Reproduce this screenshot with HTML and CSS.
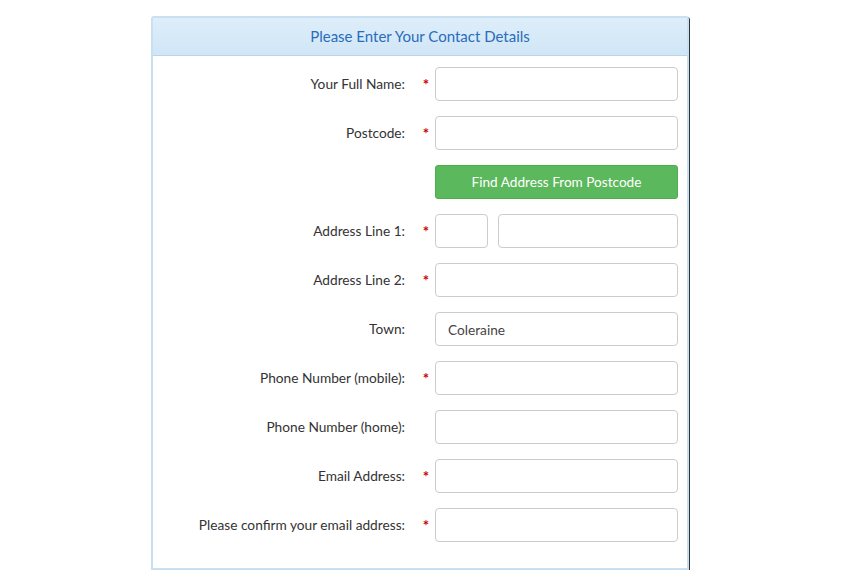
FILE: index.html
```html
<!DOCTYPE html>
<html>
<head>
<meta charset="utf-8">
<link rel="stylesheet" href="styles.css">
</head>
<body>
<div class="panel">
  <div class="panel-head">Please Enter Your Contact Details</div>
  <div class="form">
    <label class="lbl">Your Full Name:</label><span class="req">*</span><input class="field" type="text">
    <label class="lbl">Postcode:</label><span class="req">*</span><input class="field" type="text">
    <span></span><span></span><button class="btn">Find Address From Postcode</button>
    <label class="lbl">Address Line 1:</label><span class="req">*</span><div class="pair"><input class="field small" type="text"><input class="field" type="text"></div>
    <label class="lbl">Address Line 2:</label><span class="req">*</span><input class="field" type="text">
    <label class="lbl">Town:</label><span class="req"></span><input class="field" type="text" value="Coleraine">
    <label class="lbl">Phone Number (mobile):</label><span class="req">*</span><input class="field" type="text">
    <label class="lbl">Phone Number (home):</label><span class="req"></span><input class="field" type="text">
    <label class="lbl">Email Address:</label><span class="req">*</span><input class="field" type="text">
    <label class="lbl">Please confirm your email address:</label><span class="req">*</span><input class="field" type="text">
  </div>
</div>
</body>
</html>
```
FILE: styles.css
```css
html, body { margin: 0; padding: 0; background: #fff; }
body { font-family: "Lato", "Liberation Sans", sans-serif; color: #333; }
.panel {
  margin: 16px 0 0 151px;
  width: 534px;
  border: 2px solid #c8e0f0;
  border-radius: 3px 3px 0 0;
  box-shadow: 1px 1px 0 #2b3540;
  background: #fff;
}
.panel-head {
  height: 37px;
  line-height: 37px;
  text-align: center;
  font-size: 15px;
  color: #2a6cbb;
  background: linear-gradient(#deeefa, #d0e6f6);
  border-bottom: 1px solid #b8d5ea;
}
.form {
  display: grid;
  grid-template-columns: 1fr 30px 243px;
  grid-auto-rows: 34px;
  row-gap: 15px;
  padding: 11px 9px 26px 0;
}
.lbl {
  align-self: center;
  text-align: right;
  font-size: 13.7px;
  color: #333;
  white-space: nowrap;
  margin-top: -2px;
}
.req {
  align-self: center;
  text-align: right;
  padding-right: 6px;
  color: #cc0000;
  font-size: 15px;
  font-weight: bold;
}
.field {
  box-sizing: border-box;
  width: 100%;
  height: 34px;
  margin: 0;
  border: 1px solid #cccccc;
  border-radius: 4px;
  padding: 0 12px;
  font-family: inherit;
  font-size: 13.7px;
  color: #444;
  background: #fff;
}
.pair { display: flex; gap: 10px; }
.pair .small { width: 53px; flex: none; }
.pair .field:last-child { flex: 1; }
.btn {
  box-sizing: border-box;
  height: 34px;
  margin: 0;
  border: 1px solid #4cae4c;
  border-radius: 3px;
  background: #5cb85c;
  color: #fff;
  font-family: inherit;
  font-size: 13.6px;
  cursor: pointer;
}
```
